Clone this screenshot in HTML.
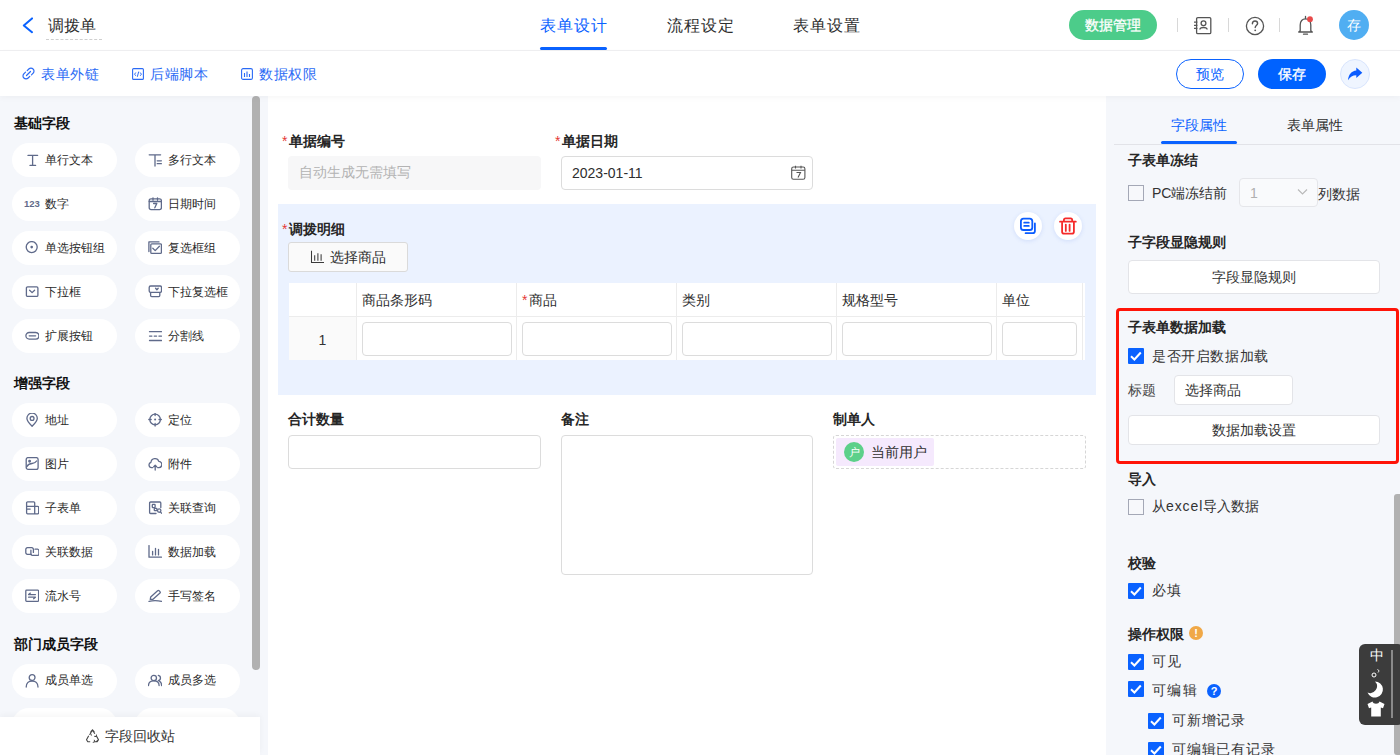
<!DOCTYPE html>
<html><head><meta charset="utf-8">
<style>
*{box-sizing:border-box;margin:0;padding:0}
html,body{width:1400px;height:755px;overflow:hidden;background:#fff;font-family:"Liberation Sans",sans-serif;color:#262626}
.a{position:absolute}
.t14{font-size:14px;line-height:20px;white-space:nowrap}
.t16{font-size:16px;line-height:20px;white-space:nowrap}
.b{font-weight:bold}
.blue{color:#0a62ff}
svg{display:block}
/* left pills */
.pill{position:absolute;width:105px;height:34px;border-radius:17px;background:#fff}
.pill .ic{position:absolute;left:13px;top:10px;width:14px;height:14px}
.pill .tx{position:absolute;left:33px;top:6.5px;font-size:12px;line-height:20px;white-space:nowrap;color:#2a2a2a}
.sec{position:absolute;left:14px;font-size:14px;line-height:20px;font-weight:bold;color:#111}
.inp{position:absolute;border:1px solid #dcdcdc;border-radius:4px;background:#fff}
.cb{position:absolute;width:16px;height:16px;border:1px solid #a4a8b6;background:#f7f8fb;border-radius:0}
.cbc{position:absolute;width:16px;height:16px;background:#0a62ff;border-radius:1px}
.req{color:#e53935;font-weight:normal;margin-right:1.5px}
</style></head><body>

<!-- ===== HEADER ===== -->
<div class="a" style="left:0;top:0;width:1400px;height:51px;background:#fff;border-bottom:1px solid #efeff1"></div>
<svg class="a" style="left:22px;top:17px" width="12" height="17" viewBox="0 0 12 17"><path d="M10 1.4 L1.8 8.4 L10 15.2" fill="none" stroke="#0a62ff" stroke-width="2" stroke-linecap="round" stroke-linejoin="round"/></svg>
<div class="a t16" style="left:48px;top:16px;color:#2e2e2e">调拨单</div>
<div class="a" style="left:46px;top:39px;width:56px;border-top:1px dashed #cfcfcf"></div>

<div class="a t16 blue" style="left:540px;top:16px;letter-spacing:1px">表单设计</div>
<div class="a" style="left:540px;top:47px;width:67px;height:3px;background:#0a62ff;border-radius:2px"></div>
<div class="a t16" style="left:667px;top:16px;color:#2e2e2e;letter-spacing:1px">流程设定</div>
<div class="a t16" style="left:793px;top:16px;color:#2e2e2e;letter-spacing:1px">表单设置</div>

<div class="a" style="left:1069px;top:10px;width:88px;height:30px;border-radius:15px;background:#4ccc8a;color:#fff;font-size:14px;line-height:30px;text-align:center;-webkit-text-stroke:0.3px #fff">数据管理</div>
<div class="a" style="left:1177px;top:18px;width:1px;height:14px;background:#d8d8d8"></div>
<div class="a" style="left:1228px;top:18px;width:1px;height:14px;background:#d8d8d8"></div>
<div class="a" style="left:1279px;top:18px;width:1px;height:14px;background:#d8d8d8"></div>
<!-- contacts icon -->
<svg class="a" style="left:1193px;top:16px" width="20" height="19" viewBox="0 0 20 19"><rect x="3.6" y="1.6" width="14.2" height="16" rx="1.2" fill="none" stroke="#555" stroke-width="1.3"/><circle cx="10.5" cy="7.3" r="2.4" fill="none" stroke="#555" stroke-width="1.3"/><path d="M6.8 13.5 C7.2 10.8 13.8 10.8 14.2 13.5" fill="none" stroke="#555" stroke-width="1.3"/><path d="M1 6.2h3.4M1 9.3h3.4M1 12.3h3.4" stroke="#555" stroke-width="1.2"/></svg>
<!-- help icon -->
<svg class="a" style="left:1245px;top:16px" width="20" height="20" viewBox="0 0 20 20"><circle cx="10" cy="10" r="8.6" fill="none" stroke="#555" stroke-width="1.3"/><path d="M7.4 7.8 C7.4 5.9 8.6 5 10 5 C11.5 5 12.6 6 12.6 7.4 C12.6 9.2 10.2 9.4 10.2 11.6" fill="none" stroke="#555" stroke-width="1.4" stroke-linecap="round"/><circle cx="10.2" cy="14.3" r="0.9" fill="#555"/></svg>
<!-- bell -->
<svg class="a" style="left:1296px;top:15px" width="20" height="21" viewBox="0 0 20 21"><path d="M4.2 15.8 V10 C4.2 6.3 6.3 3.8 9.5 3.8 C12.7 3.8 14.8 6.3 14.8 10 V15.8 L16.3 17 H2.7 Z" fill="none" stroke="#555" stroke-width="1.3" stroke-linejoin="round"/><path d="M9.5 1.5v2M7.5 19.2 H11.5" stroke="#555" stroke-width="1.3" stroke-linecap="round"/><circle cx="14" cy="4.2" r="2.9" fill="#e84a4a"/></svg>
<div class="a" style="left:1339px;top:10px;width:30px;height:30px;border-radius:50%;background:#50aef2;color:#fff;font-size:14px;line-height:30px;text-align:center">存</div>

<!-- ===== ROW 2 ===== -->
<div class="a" style="left:0;top:51px;width:1400px;height:45px;background:#fff;box-shadow:0 2px 6px rgba(0,0,0,0.035);z-index:2"></div>
<div style="position:absolute;left:0;top:0;z-index:3">
<svg class="a" style="left:22px;top:67px" width="13" height="13" viewBox="0 0 13 13"><path d="M5.2 3.6 L6.8 2 C8 0.8 10 0.8 11.1 2 C12.3 3.1 12.3 5.1 11.1 6.2 L9.5 7.8 M7.8 9.4 L6.2 11 C5 12.2 3 12.2 1.9 11 C0.7 9.9 0.7 7.9 1.9 6.8 L3.5 5.2 M4.5 8.5 L8.5 4.5" fill="none" stroke="#2a6af5" stroke-width="1.2" stroke-linecap="round"/></svg>
<div class="a t14" style="left:41px;top:64px;color:#2a6af5;letter-spacing:0.5px">表单外链</div>
<svg class="a" style="left:132px;top:68px" width="12" height="12" viewBox="0 0 12 12"><rect x="0.6" y="0.6" width="10.8" height="10.8" rx="1" fill="none" stroke="#2a6af5" stroke-width="1.1"/><path d="M3.8 4.5 L2.6 6.2 L3.8 7.8 M8.2 4.5 L9.4 6.2 L8.2 7.8 M6.7 3.6 L5.3 8.8" fill="none" stroke="#2a6af5" stroke-width="1"/></svg>
<div class="a t14" style="left:150px;top:64px;color:#2a6af5;letter-spacing:0.5px">后端脚本</div>
<svg class="a" style="left:241px;top:68px" width="12" height="12" viewBox="0 0 12 12"><rect x="0.6" y="0.6" width="10.8" height="10.8" rx="1.5" fill="none" stroke="#2a6af5" stroke-width="1.1"/><path d="M3.5 5v4M6 3.5v5.5M8.5 6v3" stroke="#2a6af5" stroke-width="1.1"/></svg>
<div class="a t14" style="left:259px;top:64px;color:#2a6af5;letter-spacing:0.5px">数据权限</div>

<div class="a" style="left:1176px;top:59px;width:68px;height:30px;border:1px solid #0a62ff;border-radius:15px;color:#0a62ff;font-size:14px;line-height:28px;text-align:center">预览</div>
<div class="a" style="left:1258px;top:59px;width:68px;height:30px;background:#0062ff;border-radius:15px;color:#fff;font-size:14px;line-height:30px;text-align:center;-webkit-text-stroke:0.35px #fff">保存</div>
<div class="a" style="left:1340px;top:59px;width:30px;height:30px;border:1px solid #d9e5fd;background:#eff5ff;border-radius:50%"></div>
<svg class="a" style="left:1347px;top:67px" width="16" height="14" viewBox="0 0 16 14"><path d="M9.3 0.6 L15.3 5.8 L9.3 11 V8.2 C5.6 8.2 3.2 9.6 1 13.2 C1.4 7.6 4.5 3.9 9.3 3.5 Z" fill="#0a5cff"/></svg>
</div>

<!-- ===== BODY BG ===== -->
<div class="a" style="left:0;top:96px;width:268px;height:659px;background:#f5f7fb"></div>
<div class="a" style="left:268px;top:96px;width:838px;height:659px;background:#fff"></div>
<div class="a" style="left:1106px;top:96px;width:294px;height:659px;background:#f5f7fb"></div>

<div class="a" style="left:0;top:95px;width:268px;height:660px;overflow:hidden">
<div class="sec" style="top:18px">基础字段</div>
<div class="pill" style="left:12px;top:48px"><svg class="ic" viewBox="0 0 14 14" fill="none" stroke="#5f6a8a" stroke-width="1.3" stroke-linecap="round" stroke-linejoin="round"><path d="M3 2.4h9.6M7.6 2.4V12.4M5 12.4h5.6"/></svg><div class="tx">单行文本</div></div>
<div class="pill" style="left:135px;top:48px"><svg class="ic" viewBox="0 0 14 14" fill="none" stroke="#5f6a8a" stroke-width="1.3" stroke-linecap="round" stroke-linejoin="round"><path d="M1.2 1.8h11.4M7 1.8V13M9.2 7.8h4.2M9.2 10.7h4.2"/></svg><div class="tx">多行文本</div></div>
<div class="pill" style="left:12px;top:92px"><div class="ic" style="left:12px;top:11px;width:18px;height:12px;font-size:9.5px;line-height:12px;font-weight:bold;color:#5f6a8a">123</div><div class="tx">数字</div></div>
<div class="pill" style="left:135px;top:92px"><svg class="ic" viewBox="0 0 14 14" fill="none" stroke="#5f6a8a" stroke-width="1.3" stroke-linecap="round" stroke-linejoin="round"><rect x="1.2" y="1.8" width="12.2" height="10.8" rx="1.8"/><path d="M1.2 4.5h12.2M5 0.8v2.2M9.5 0.8v2.2M5.6 6.5h3.2L6.8 10.8"/></svg><div class="tx">日期时间</div></div>
<div class="pill" style="left:12px;top:136px"><svg class="ic" viewBox="0 0 14 14" fill="none" stroke="#5f6a8a" stroke-width="1.3" stroke-linecap="round" stroke-linejoin="round"><circle cx="6.7" cy="6.1" r="5.5"/><circle cx="6.7" cy="6.1" r="1.3" fill="#5f6a8a" stroke="none"/></svg><div class="tx">单选按钮组</div></div>
<div class="pill" style="left:135px;top:136px"><svg class="ic" viewBox="0 0 14 14" fill="none" stroke="#5f6a8a" stroke-width="1.3" stroke-linecap="round" stroke-linejoin="round"><path d="M0.9 10.6V0.9H11"/><rect x="2.8" y="2.8" width="10.6" height="9.6" rx="1"/><path d="M4.8 7.2l2.4 2.4 4.2-4.4"/></svg><div class="tx">复选框组</div></div>
<div class="pill" style="left:12px;top:180px"><svg class="ic" viewBox="0 0 14 14" fill="none" stroke="#5f6a8a" stroke-width="1.3" stroke-linecap="round" stroke-linejoin="round"><rect x="1.4" y="1.8" width="11.5" height="9.6" rx="1.2"/><path d="M4.6 5.2l2.5 2.4 2.5-2.4"/></svg><div class="tx">下拉框</div></div>
<div class="pill" style="left:135px;top:180px"><svg class="ic" viewBox="0 0 14 14" fill="none" stroke="#5f6a8a" stroke-width="1.3" stroke-linecap="round" stroke-linejoin="round"><rect x="1.2" y="1" width="12.3" height="6.4" rx="1.4"/><path d="M2.6 7.6v2.9a1.1 1.1 0 0 0 1.1 1.1h7a1.1 1.1 0 0 0 1.1-1.1V7.6M7.6 3.3l1.3 1.5 1.3-1.5"/></svg><div class="tx">下拉复选框</div></div>
<div class="pill" style="left:12px;top:224px"><svg class="ic" viewBox="0 0 14 14" fill="none" stroke="#5f6a8a" stroke-width="1.3" stroke-linecap="round" stroke-linejoin="round"><rect x="0.9" y="3.5" width="13" height="6.6" rx="3.3"/><path d="M4.2 6.8h6.4"/></svg><div class="tx">扩展按钮</div></div>
<div class="pill" style="left:135px;top:224px"><svg class="ic" viewBox="0 0 14 14" fill="none" stroke="#5f6a8a" stroke-width="1.3" stroke-linecap="round" stroke-linejoin="round"><path d="M1.5 2.7h12M1.5 7.1h2.4M6.2 7.1h2.4M10.9 7.1h2.6M1.5 11.5h12"/></svg><div class="tx">分割线</div></div>
<div class="sec" style="top:278px">增强字段</div>
<div class="pill" style="left:12px;top:308px"><svg class="ic" viewBox="0 0 14 14" fill="none" stroke="#5f6a8a" stroke-width="1.3" stroke-linecap="round" stroke-linejoin="round"><path d="M7.1 13.3C3.6 9.9 1.9 7.6 1.9 5.3a5.2 5.2 0 0 1 10.4 0c0 2.3-1.7 4.6-5.2 8z"/><circle cx="7.1" cy="5.4" r="1.9"/></svg><div class="tx">地址</div></div>
<div class="pill" style="left:135px;top:308px"><svg class="ic" viewBox="0 0 14 14" fill="none" stroke="#5f6a8a" stroke-width="1.3" stroke-linecap="round" stroke-linejoin="round"><circle cx="7.1" cy="6.5" r="5.3"/><circle cx="7.1" cy="6.5" r="1" fill="#5f6a8a" stroke="none"/><path d="M7.1 0.2v2.4M7.1 10.4v2.6M0.8 6.5h2.4M11 6.5h2.4"/></svg><div class="tx">定位</div></div>
<div class="pill" style="left:12px;top:352px"><svg class="ic" viewBox="0 0 14 14" fill="none" stroke="#5f6a8a" stroke-width="1.3" stroke-linecap="round" stroke-linejoin="round"><rect x="1.2" y="0.6" width="11.9" height="11.8" rx="1.9"/><path d="M1.8 9.8C3 7.4 4.6 6.6 7 6.5S10.6 5.6 11.6 4"/><circle cx="4.6" cy="4.3" r="0.8"/></svg><div class="tx">图片</div></div>
<div class="pill" style="left:135px;top:352px"><svg class="ic" viewBox="0 0 14 14" fill="none" stroke="#5f6a8a" stroke-width="1.3" stroke-linecap="round" stroke-linejoin="round"><path d="M4.6 10.6H3.6A2.7 2.7 0 0 1 3 5.3 4 4 0 0 1 10.8 4.4 3.1 3.1 0 0 1 10.6 10.6H9.6"/><path d="M7.2 8.2v4.8M5.7 9.7l1.5-1.5 1.5 1.5"/></svg><div class="tx">附件</div></div>
<div class="pill" style="left:12px;top:396px"><svg class="ic" viewBox="0 0 14 14" fill="none" stroke="#5f6a8a" stroke-width="1.3" stroke-linecap="round" stroke-linejoin="round"><path d="M9.7 5.6V1.8a1 1 0 0 0-1-1H2.6a1 1 0 0 0-1 1v10a1 1 0 0 0 1 1h10.1a1 1 0 0 0 1-1V6.4a1 1 0 0 0-1-1H9.7v7.3M1.6 5.3h8M2.6 8.1h2.6"/></svg><div class="tx">子表单</div></div>
<div class="pill" style="left:135px;top:396px"><svg class="ic" viewBox="0 0 14 14" fill="none" stroke="#5f6a8a" stroke-width="1.3" stroke-linecap="round" stroke-linejoin="round"><path d="M12.8 6.5V2a1 1 0 0 0-1-1H2.6a1 1 0 0 0-1 1v9.5a1 1 0 0 0 1 1h5.4"/><rect x="4.3" y="3.4" width="2.8" height="3.2" rx="0.6"/><rect x="6.3" y="7.3" width="2.6" height="2.4" rx="0.5"/><circle cx="11.2" cy="9.6" r="1.7"/><path d="M12.4 10.9l1.1 1.3"/></svg><div class="tx">关联查询</div></div>
<div class="pill" style="left:12px;top:440px"><svg class="ic" viewBox="0 0 14 14" fill="none" stroke="#5f6a8a" stroke-width="1.3" stroke-linecap="round" stroke-linejoin="round"><path d="M6.4 9.3H2.4A1.6 1.6 0 0 1 0.8 7.7V4.3A1.6 1.6 0 0 1 2.4 2.7H6.8A1.6 1.6 0 0 1 8.4 4.3V7.4"/><path d="M5.9 5.2V8.9A1.5 1.5 0 0 0 7.4 10.4H12.4A1.5 1.5 0 0 0 13.9 8.9V5.7A1.5 1.5 0 0 0 12.4 4.2H10"/></svg><div class="tx">关联数据</div></div>
<div class="pill" style="left:135px;top:440px"><svg class="ic" viewBox="0 0 14 14" fill="none" stroke="#5f6a8a" stroke-width="1.3" stroke-linecap="round" stroke-linejoin="round"><path d="M1 0.6V12.2H13.6M4.6 6.3v3.6M7.5 3.3v6.6M10.5 4.3v5.6"/></svg><div class="tx">数据加载</div></div>
<div class="pill" style="left:12px;top:484px"><svg class="ic" viewBox="0 0 14 14" fill="none" stroke="#5f6a8a" stroke-width="1.3" stroke-linecap="round" stroke-linejoin="round"><rect x="0.8" y="1.1" width="12.8" height="11.3" rx="0.8"/><path d="M3.6 5.6h6.8M3.6 5.6l1.8-1.5M3.6 8.2h6.8l-1.8 1.5"/></svg><div class="tx">流水号</div></div>
<div class="pill" style="left:135px;top:484px"><svg class="ic" viewBox="0 0 14 14" fill="none" stroke="#5f6a8a" stroke-width="1.3" stroke-linecap="round" stroke-linejoin="round"><path d="M2.3 10.4l0.4-2.5 6.9-6.2a1.1 1.1 0 0 1 1.5 0l0.9 0.9a1.1 1.1 0 0 1 0 1.5L5 10.3z"/><path d="M1 12.3C5 11.5 9 11.5 13.6 12.3"/></svg><div class="tx">手写签名</div></div>
<div class="sec" style="top:538.5px">部门成员字段</div>
<div class="pill" style="left:12px;top:568.5px"><svg class="ic" viewBox="0 0 14 14" fill="none" stroke="#5f6a8a" stroke-width="1.3" stroke-linecap="round" stroke-linejoin="round"><circle cx="7.1" cy="3.6" r="2.9"/><path d="M1.2 13C1.2 9.2 3.8 7 7.1 7S13 9.2 13 13"/></svg><div class="tx">成员单选</div></div>
<div class="pill" style="left:135px;top:568.5px"><svg class="ic" viewBox="0 0 14 14" fill="none" stroke="#5f6a8a" stroke-width="1.3" stroke-linecap="round" stroke-linejoin="round"><circle cx="5.8" cy="4" r="2.7"/><path d="M0.5 11.6C0.5 8.6 2.6 6.9 5.8 6.9S11.1 8.6 11.1 11.6M10.3 1.4a2.7 2.7 0 0 1 0 5.3M11.6 7.3C12.9 7.9 13.6 9.4 13.6 11.6"/></svg><div class="tx">成员多选</div></div>
<div class="pill" style="left:12px;top:612.5px"><svg class="ic" viewBox="0 0 14 14" fill="none" stroke="#5f6a8a" stroke-width="1.3" stroke-linecap="round" stroke-linejoin="round"><circle cx="7.1" cy="3.6" r="2.9"/><path d="M1.2 13C1.2 9.2 3.8 7 7.1 7S13 9.2 13 13"/></svg><div class="tx"></div></div>
<div class="pill" style="left:135px;top:612.5px"><svg class="ic" viewBox="0 0 14 14" fill="none" stroke="#5f6a8a" stroke-width="1.3" stroke-linecap="round" stroke-linejoin="round"><circle cx="5.8" cy="4" r="2.7"/><path d="M0.5 11.6C0.5 8.6 2.6 6.9 5.8 6.9S11.1 8.6 11.1 11.6M10.3 1.4a2.7 2.7 0 0 1 0 5.3M11.6 7.3C12.9 7.9 13.6 9.4 13.6 11.6"/></svg><div class="tx"></div></div>
</div>
<div class="a" style="left:252px;top:96px;width:8px;height:574px;border-radius:4px;background:#b1b1b1"></div>
<div class="a" style="left:0;top:717px;width:260px;height:38px;background:#fff;box-shadow:0 -2px 6px rgba(0,0,0,0.04)"></div>
<svg class="a" style="left:85px;top:729px" width="15" height="14" viewBox="0 0 15 14"><path d="M5.6 2.8L7.5 0.9l1.9 1.9M7.5 0.9l2.3 3.9M11.3 6.8l2.2 3.9-1.3 2.1H9.6M13.5 10.7L11 12.8M5.2 12.8H2.8l-1.3-2.1 2.2-3.9M3.7 6.8l-2.2 3.9M5.2 4.6L7.5 0.9" stroke="#444" stroke-width="1.1" fill="none" stroke-linejoin="round"/><path d="M9.2 10.8l0.6 2-2 0.6M4.2 5.5l1.6-0.9 0.6 2M11.5 5.6l-0.3 2-2-0.3" stroke="#444" stroke-width="1" fill="none"/></svg>
<div class="a t14" style="left:105px;top:726px;color:#333">字段回收站</div>

<!-- ===== MAIN ===== -->
<div class="a t14 b" style="left:282px;top:130.5px;color:#262626"><span class="req">*</span>单据编号</div>
<div class="a" style="left:288px;top:156px;width:253px;height:34px;background:#f7f7f8;border-radius:4px"></div>
<div class="a t14" style="left:299px;top:162px;color:#b3b3b3">自动生成无需填写</div>
<div class="a t14 b" style="left:555px;top:130.5px;color:#262626"><span class="req">*</span>单据日期</div>
<div class="inp" style="left:561px;top:156px;width:252px;height:34px"></div>
<div class="a t14" style="left:572px;top:163px;color:#2e2e2e">2023-01-11</div>
<svg class="a" style="left:791px;top:165px" width="15" height="15" viewBox="0 0 15 15"><rect x="0.7" y="2" width="13.2" height="12.2" rx="1.8" fill="none" stroke="#555" stroke-width="1.1"/><path d="M0.8 5.2h13M4.5 0.8v2.6M10 0.8v2.6M5.5 7.5h4L7 12.5" fill="none" stroke="#555" stroke-width="1.1"/></svg>

<div class="a" style="left:278px;top:204px;width:818px;height:191px;background:#ebf2ff"></div>
<div class="a t14 b" style="left:282px;top:219px;color:#262626"><span class="req">*</span>调拨明细</div>
<div class="a" style="left:288px;top:242px;width:120px;height:30px;background:#fafafa;border:1px solid #dadada;border-radius:3px"></div>
<svg class="a" style="left:310px;top:250px" width="15" height="14" viewBox="0 0 15 14"><path d="M1.5 0.8V12.5H14M4.7 5.2v5.5M7.9 3.2v7.5M11.1 4.2v6.5" fill="none" stroke="#3a3a3a" stroke-width="1.05"/></svg>
<div class="a t14" style="left:330px;top:247px;color:#2e2e2e">选择商品</div>

<div class="a" style="left:1014px;top:212px;width:28px;height:28px;border-radius:50%;background:#fff;box-shadow:0 1px 4px rgba(60,110,220,0.15)"></div>
<svg class="a" style="left:1014px;top:212px" width="28" height="28" viewBox="0 0 28 28"><rect x="6.9" y="6.6" width="11.4" height="11.4" rx="2.6" fill="none" stroke="#0a5cff" stroke-width="1.8"/><path d="M10.2 10.7h4.6M10.2 13.9h4.6" stroke="#0a5cff" stroke-width="1.8" stroke-linecap="round"/><path d="M20.9 11.4V19a2.2 2.2 0 0 1-2.2 2.2H11.6" fill="none" stroke="#0a5cff" stroke-width="1.8" stroke-linecap="round"/></svg>
<div class="a" style="left:1054px;top:212px;width:28px;height:28px;border-radius:50%;background:#fff;box-shadow:0 1px 4px rgba(60,110,220,0.15)"></div>
<svg class="a" style="left:1054px;top:212px" width="28" height="28" viewBox="0 0 28 28"><path d="M6 9.7H21.8M9.9 9.5V8c0-1 0.6-1.7 1.6-1.7h5.1c1 0 1.6 0.7 1.6 1.7v1.5M8.1 11v8.8c0 1.2 0.7 1.9 1.9 1.9h8c1.2 0 1.9-0.7 1.9-1.9V11M11.8 12.6v6.3M15.6 12.6v6.3" fill="none" stroke="#f52a2a" stroke-width="1.8" stroke-linecap="round"/></svg>

<!-- table -->
<div class="a" style="left:289px;top:283px;width:796px;height:77px;background:#fff;overflow:hidden">
  <div class="a" style="left:0;top:34px;width:796px;height:43px;"></div>
  <div class="a" style="left:0;top:34px;width:67px;height:43px;background:#fafafa"></div>
  <div class="a" style="left:0;top:33px;width:796px;height:1px;background:#ececec"></div>
  <div class="a" style="left:67px;top:0;width:1px;height:77px;background:#ececec"></div>
  <div class="a" style="left:227px;top:0;width:1px;height:77px;background:#ececec"></div>
  <div class="a" style="left:387px;top:0;width:1px;height:77px;background:#ececec"></div>
  <div class="a" style="left:547px;top:0;width:1px;height:77px;background:#ececec"></div>
  <div class="a" style="left:707px;top:0;width:1px;height:77px;background:#ececec"></div>
  <div class="a" style="left:793px;top:0;width:1px;height:77px;background:#ececec"></div>
  <div class="a t14" style="left:73px;top:7px;color:#2e2e2e">商品条形码</div>
  <div class="a t14" style="left:233px;top:7px;color:#2e2e2e"><span class="req">*</span>商品</div>
  <div class="a t14" style="left:393px;top:7px;color:#2e2e2e">类别</div>
  <div class="a t14" style="left:553px;top:7px;color:#2e2e2e">规格型号</div>
  <div class="a t14" style="left:713px;top:7px;color:#2e2e2e">单位</div>
  <div class="a t14" style="left:0;top:47px;width:67px;text-align:center;color:#333">1</div>
  <div class="inp" style="left:73px;top:39px;width:150px;height:34px"></div>
  <div class="inp" style="left:233px;top:39px;width:150px;height:34px"></div>
  <div class="inp" style="left:393px;top:39px;width:150px;height:34px"></div>
  <div class="inp" style="left:553px;top:39px;width:150px;height:34px"></div>
  <div class="inp" style="left:713px;top:39px;width:75px;height:34px"></div>
</div>

<div class="a t14 b" style="left:288px;top:408.5px;color:#262626">合计数量</div>
<div class="inp" style="left:288px;top:435px;width:253px;height:34px"></div>
<div class="a t14 b" style="left:561px;top:408.5px;color:#262626">备注</div>
<div class="inp" style="left:561px;top:435px;width:252px;height:140px"></div>
<div class="a t14 b" style="left:833px;top:408.5px;color:#262626">制单人</div>
<div class="a" style="left:833px;top:435px;width:253px;height:34px;border:1px dashed #d6d6d6;border-radius:3px"></div>
<div class="a" style="left:836px;top:438px;width:98px;height:28px;background:#f5e9fd;border-radius:2px"></div>
<div class="a" style="left:844px;top:442px;width:20px;height:20px;border-radius:50%;background:#5cd08a;color:#fff;font-size:11px;line-height:20px;text-align:center">户</div>
<div class="a t14" style="left:871px;top:442px;color:#2e2e2e">当前用户</div>

<!-- ===== RIGHT ===== -->
<div class="a" style="left:1114px;top:144px;width:286px;height:1px;background:#e2e3e8"></div>
<div class="a t14 blue" style="left:1171px;top:115px">字段属性</div>
<div class="a" style="left:1161px;top:141px;width:76px;height:3px;background:#0a62ff;border-radius:1.5px"></div>
<div class="a t14" style="left:1287px;top:115px;color:#2e2e2e">表单属性</div>

<div class="a t14 b" style="left:1128px;top:150px;color:#262626">子表单冻结</div>
<div class="cb" style="left:1128px;top:185px"></div>
<div class="a t14" style="left:1152px;top:183px;color:#333">PC端冻结前</div>
<div class="a" style="left:1239px;top:178px;width:79px;height:29px;background:#f9fafc;border:1px solid #e5e6ea;border-radius:4px"></div>
<div class="a t14" style="left:1250px;top:183px;color:#b0b0b0">1</div>
<svg class="a" style="left:1297px;top:188px" width="11" height="8" viewBox="0 0 11 8"><path d="M1 1.5l4.5 4.5 4.5-4.5" fill="none" stroke="#b8b8b8" stroke-width="1.1"/></svg>
<div class="a t14" style="left:1318px;top:183.5px;color:#333">列数据</div>

<div class="a t14 b" style="left:1128px;top:231.5px;color:#262626">子字段显隐规则</div>
<div class="a" style="left:1128px;top:260px;width:252px;height:34px;background:#fff;border:1px solid #e3e4e8;border-radius:4px;color:#333;font-size:14px;line-height:32px;text-align:center">字段显隐规则</div>

<div class="a" style="left:1116px;top:308px;width:283px;height:156px;border:3px solid #ff1408;border-radius:4px"></div>
<div class="a t14 b" style="left:1128px;top:317px;color:#262626">子表单数据加载</div>
<div class="cbc" style="left:1128px;top:348px"><svg width="16" height="16" viewBox="0 0 16 16"><path d="M3 8.2l3.4 3.3 6.4-7" fill="none" stroke="#fff" stroke-width="2"/></svg></div>
<div class="a t14" style="left:1152px;top:346px;color:#333;letter-spacing:0.6px">是否开启数据加载</div>
<div class="a t14" style="left:1128px;top:380px;color:#444">标题</div>
<div class="a" style="left:1174px;top:375px;width:119px;height:30px;background:#fff;border:1px solid #e3e4e8;border-radius:4px"></div>
<div class="a t14" style="left:1185px;top:380px;color:#333">选择商品</div>
<div class="a" style="left:1128px;top:415px;width:252px;height:30px;background:#fff;border:1px solid #e3e4e8;border-radius:4px;color:#333;font-size:14px;line-height:28px;text-align:center">数据加载设置</div>

<div class="a t14 b" style="left:1128px;top:469px;color:#262626">导入</div>
<div class="cb" style="left:1128px;top:499px"></div>
<div class="a t14" style="left:1152px;top:496px;color:#333">从<span style="letter-spacing:0.9px">excel</span>导入数据</div>

<div class="a t14 b" style="left:1128px;top:553px;color:#262626">校验</div>
<div class="cbc" style="left:1128px;top:583px"><svg width="16" height="16" viewBox="0 0 16 16"><path d="M3 8.2l3.4 3.3 6.4-7" fill="none" stroke="#fff" stroke-width="2"/></svg></div>
<div class="a t14" style="left:1152px;top:580px;color:#333;letter-spacing:0.8px">必填</div>

<div class="a t14 b" style="left:1128px;top:623.5px;color:#262626">操作权限</div>
<div class="a" style="left:1189px;top:626px;width:14px;height:14px;border-radius:50%;background:#f0a847;color:#fff;font-size:11px;line-height:14px;text-align:center;font-weight:bold">!</div>
<div class="cbc" style="left:1128px;top:654px"><svg width="16" height="16" viewBox="0 0 16 16"><path d="M3 8.2l3.4 3.3 6.4-7" fill="none" stroke="#fff" stroke-width="2"/></svg></div>
<div class="a t14" style="left:1152px;top:651px;color:#333;letter-spacing:0.8px">可见</div>
<div class="cbc" style="left:1128px;top:681px"><svg width="16" height="16" viewBox="0 0 16 16"><path d="M3 8.2l3.4 3.3 6.4-7" fill="none" stroke="#fff" stroke-width="2"/></svg></div>
<div class="a t14" style="left:1152px;top:680px;color:#333;letter-spacing:1.4px">可编辑</div>
<div class="a" style="left:1207px;top:684px;width:14px;height:14px;border-radius:50%;background:#0a62ff;color:#fff;font-size:11px;line-height:14px;text-align:center;font-weight:bold">?</div>
<div class="cbc" style="left:1148px;top:713px"><svg width="16" height="16" viewBox="0 0 16 16"><path d="M3 8.2l3.4 3.3 6.4-7" fill="none" stroke="#fff" stroke-width="2"/></svg></div>
<div class="a t14" style="left:1172px;top:710px;color:#333;letter-spacing:0.8px">可新增记录</div>
<div class="cbc" style="left:1148px;top:742px"><svg width="16" height="16" viewBox="0 0 16 16"><path d="M3 8.2l3.4 3.3 6.4-7" fill="none" stroke="#fff" stroke-width="2"/></svg></div>
<div class="a t14" style="left:1172px;top:739px;color:#333;letter-spacing:0.8px">可编辑已有记录</div>

<div class="a" style="left:1394px;top:494px;width:6px;height:261px;background:#b1b1b1;border-radius:3px 0 0 3px"></div>
<div class="a" style="left:1359px;top:644px;width:45px;height:81px;background:#3c3c3c;border-radius:6px"></div>
<div class="a" style="left:1391px;top:650px;width:2px;height:68px;background:#8a8a8a"></div>
<div class="a" style="left:1368px;top:646px;width:18px;font-size:14px;line-height:18px;color:#fff;text-align:center">中</div>
<svg class="a" style="left:1371px;top:668px" width="10" height="10" viewBox="0 0 10 10"><circle cx="3" cy="7" r="2" fill="none" stroke="#fff" stroke-width="1"/><path d="M6.5 1.5c1.5 0.3 1.8 2 0.5 3" fill="none" stroke="#fff" stroke-width="1"/></svg>
<svg class="a" style="left:1367px;top:680px;transform:scaleX(-1)" width="18" height="19" viewBox="0 0 18 19"><path d="M10 1.5a8 8 0 1 0 7.5 11A6.8 6.8 0 0 1 10 1.5z" fill="#fff"/></svg>
<svg class="a" style="left:1367px;top:701px" width="18" height="16" viewBox="0 0 18 16"><path d="M5.5 0.5L0.5 3l1.5 4.2 2.2-0.7V15.5h9.6V6.5l2.2 0.7 1.5-4.2-5-2.5c-0.5 1.5-1.7 2.2-3.5 2.2s-3-0.7-3.5-2.2z" fill="#fff"/></svg>


</body></html>
